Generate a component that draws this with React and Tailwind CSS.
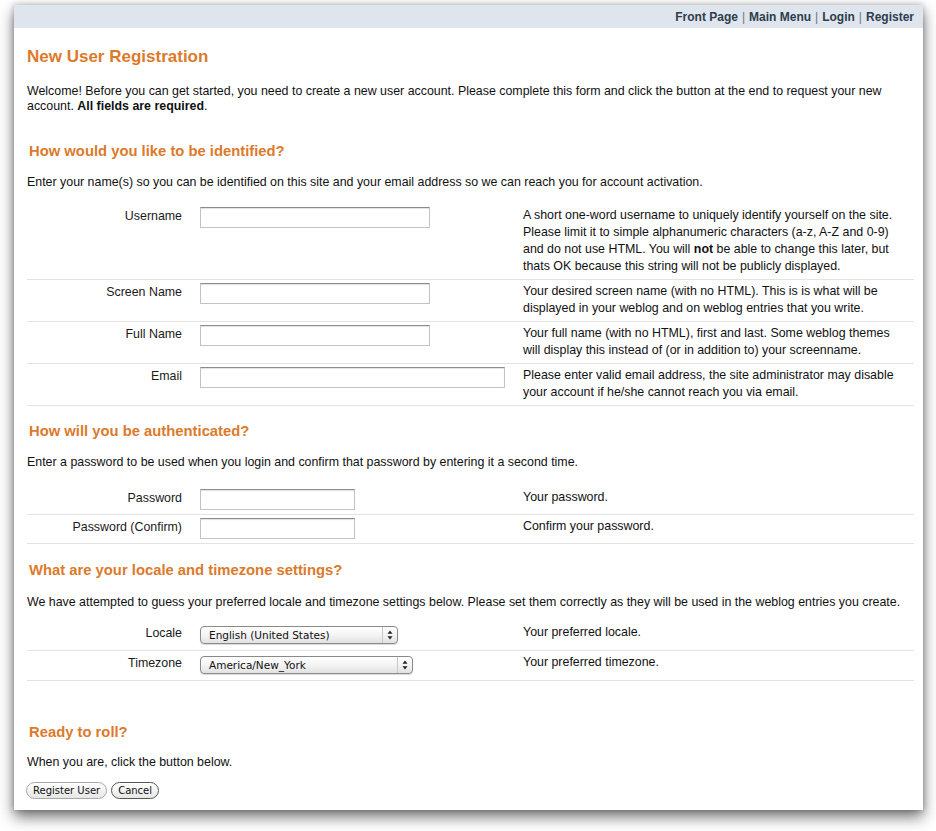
import React from "react";

const font = { fontFamily: '"Liberation Sans", Arial, Helvetica, sans-serif' };

function TextInput({ width }) {
  return (
    <div
      className={`${width} h-[21px] bg-white border border-[#c4c4c4] border-t-[#8c8c8c] shadow-[inset_0_1px_1px_rgba(0,0,0,0.12)]`}
    />
  );
}

function SelectBox({ width, value }) {
  return (
    <div
      className={`${width} h-[18px] flex items-center justify-between rounded-[4px] border border-[#8a8a8a] bg-gradient-to-b from-white via-[#f4f4f4] to-[#e2e2e2] shadow-[0_1px_1px_rgba(0,0,0,0.15)]`}
    >
      <span
        className="pl-[8px] text-[10.5px] text-[#111] leading-none"
        style={{ fontFamily: '"DejaVu Sans", "Liberation Sans", sans-serif' }}
      >
        {value}
      </span>
      <span className="flex h-full w-[15px] items-center justify-center border-l border-[#c8c8c8]">
        <svg width="6" height="10" viewBox="0 0 6 10">
          <path d="M3 0.5 L5.5 3.8 H0.5 Z" fill="#222" />
          <path d="M3 9.5 L5.5 6.2 H0.5 Z" fill="#222" />
        </svg>
      </span>
    </div>
  );
}

function Row({ label, children, help, pad = "pt-[3px] pb-[4px]" }) {
  return (
    <div className={`grid grid-cols-[155px_341px_376px] border-b border-[#e3e3e3] ${pad}`}>
      <div className="text-right text-[12.4px] leading-[17px] text-[#1a1a1a] pt-[1px]">{label}</div>
      <div className="pl-[18px]">{children}</div>
      <div className="text-[12.4px] leading-[17px] text-[#111]">{help}</div>
    </div>
  );
}

function SectionHead({ children, className = "" }) {
  return (
    <h2 className={`pl-[2px] text-[14.8px] leading-[18px] font-bold text-[#dc7a2c] ${className}`}>{children}</h2>
  );
}

function Intro({ children, className = "" }) {
  return <p className={`text-[12.4px] leading-[17px] text-[#111] ${className}`}>{children}</p>;
}

function PillButton({ children, dark }) {
  return (
    <button
      className={`h-[17px] rounded-full border px-[6px] text-[10px] leading-none text-[#111] bg-gradient-to-b from-white to-[#e6e6e6] ${
        dark ? "border-[#555]" : "border-[#a8a8a8]"
      }`}
      style={{ fontFamily: '"DejaVu Sans", "Liberation Sans", sans-serif' }}
    >
      {children}
    </button>
  );
}

export default function App() {
  return (
    <div className="min-h-[831px] bg-white pt-[5px] pl-[14px]" style={font}>
      <div className="w-[909px] h-[805px] bg-white shadow-[0_7px_14px_rgba(0,0,0,0.55),0_0_6px_rgba(0,0,0,0.25)]">
        <div className="h-[23px] bg-[#dfe5ec] flex items-center justify-end pr-[9px] text-[12px] font-bold text-[#2e3d4d]">
          <a>Front Page</a>
          <span className="px-[4px] font-normal text-[#6b7785]">|</span>
          <a>Main Menu</a>
          <span className="px-[4px] font-normal text-[#6b7785]">|</span>
          <a>Login</a>
          <span className="px-[4px] font-normal text-[#6b7785]">|</span>
          <a>Register</a>
        </div>

        <div className="pl-[13px] pr-[9px]">
          <h1 className="mt-[18px] text-[17px] leading-[21px] font-bold text-[#dc7a2c]">New User Registration</h1>
          <p className="mt-[17px] text-[12.4px] leading-[15px] text-[#111]">
            Welcome! Before you can get started, you need to create a new user account. Please complete this form and
            click the button at the end to request your new account. <b>All fields are required</b>.
          </p>

          <SectionHead className="mt-[28px]">How would you like to be identified?</SectionHead>
          <Intro className="mt-[14px]">
            Enter your name(s) so you can be identified on this site and your email address so we can reach you for
            account activation.
          </Intro>
          <div className="mt-[13px]">
            <Row
              label="Username"
              help={
                <>
                  A short one-word username to uniquely identify yourself on the site. Please limit it to simple
                  alphanumeric characters (a-z, A-Z and 0-9) and do not use HTML. You will <b>not</b> be able to change
                  this later, but thats OK because this string will not be publicly displayed.
                </>
              }
            >
              <TextInput width="w-[230px]" />
            </Row>
            <Row
              label="Screen Name"
              help="Your desired screen name (with no HTML). This is is what will be displayed in your weblog and on weblog entries that you write."
            >
              <TextInput width="w-[230px]" />
            </Row>
            <Row
              label="Full Name"
              help="Your full name (with no HTML), first and last. Some weblog themes will display this instead of (or in addition to) your screenname."
            >
              <TextInput width="w-[230px]" />
            </Row>
            <Row
              label="Email"
              help="Please enter valid email address, the site administrator may disable your account if he/she cannot reach you via email."
            >
              <TextInput width="w-[305px]" />
            </Row>
          </div>

          <SectionHead className="mt-[16px]">How will you be authenticated?</SectionHead>
          <Intro className="mt-[14px]">
            Enter a password to be used when you login and confirm that password by entering it a second time.
          </Intro>
          <div className="mt-[15px]">
            <Row label="Password" help="Your password.">
              <TextInput width="w-[155px]" />
            </Row>
            <Row label="Password (Confirm)" help="Confirm your password.">
              <TextInput width="w-[155px]" />
            </Row>
          </div>

          <SectionHead className="mt-[17px]">What are your locale and timezone settings?</SectionHead>
          <Intro className="mt-[15px]">
            We have attempted to guess your preferred locale and timezone settings below. Please set them correctly as
            they will be used in the weblog entries you create.
          </Intro>
          <div className="mt-[10px]">
            <Row label="Locale" help="Your preferred locale." pad="pt-[3px] pb-[6px]">
              <div className="pt-[2px]">
                <SelectBox width="w-[198px]" value="English (United States)" />
              </div>
            </Row>
            <Row label="Timezone" help="Your preferred timezone." pad="pt-[3px] pb-[6px]">
              <div className="pt-[2px]">
                <SelectBox width="w-[213px]" value="America/New_York" />
              </div>
            </Row>
          </div>

          <SectionHead className="mt-[42px]">Ready to roll?</SectionHead>
          <Intro className="mt-[13px]">When you are, click the button below.</Intro>
          <div className="mt-[11px] flex gap-[4px] -ml-[1px]">
            <PillButton>Register User</PillButton>
            <PillButton dark>Cancel</PillButton>
          </div>
        </div>
      </div>
    </div>
  );
}
